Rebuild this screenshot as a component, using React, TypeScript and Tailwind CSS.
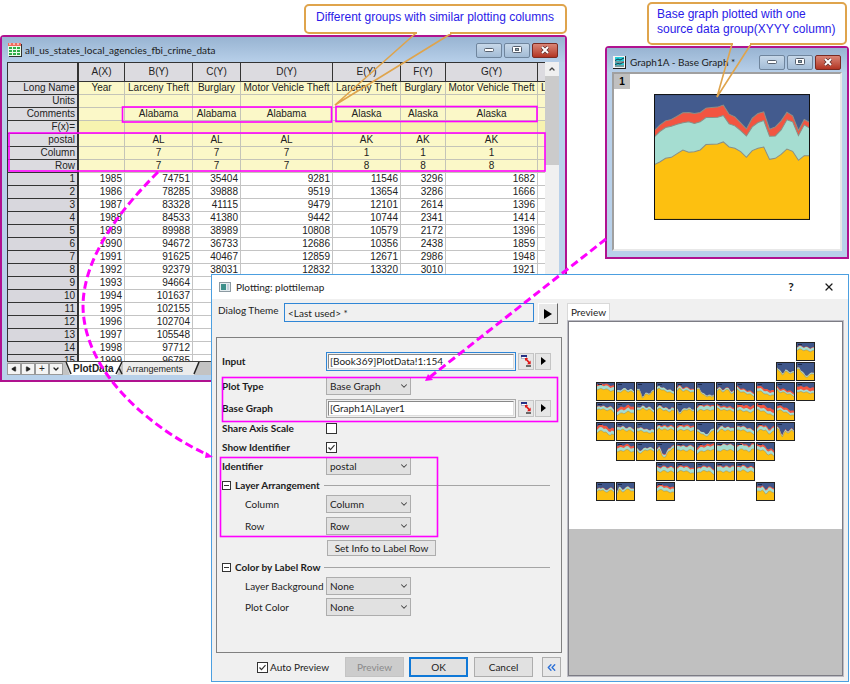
import React from "react";
import { ChevronDown, ChevronUp, ChevronsLeft, Play, X } from "lucide-react";

const COLUMNS = ["A(X)", "B(Y)", "C(Y)", "D(Y)", "E(Y)", "F(Y)", "G(Y)"];

const LABEL_ROWS: { name: string; cells: string[] }[] = [
  { name: "Long Name", cells: ["Year", "Larceny Theft", "Burglary", "Motor Vehicle Theft", "Larceny Theft", "Burglary", "Motor Vehicle Theft"] },
  { name: "Units", cells: ["", "", "", "", "", "", ""] },
  { name: "Comments", cells: ["", "Alabama", "Alabama", "Alabama", "Alaska", "Alaska", "Alaska"] },
  { name: "F(x)=", cells: ["", "", "", "", "", "", ""] },
  { name: "postal", cells: ["", "AL", "AL", "AL", "AK", "AK", "AK"] },
  { name: "Column", cells: ["", "7", "7", "7", "1", "1", "1"] },
  { name: "Row", cells: ["", "7", "7", "7", "8", "8", "8"] },
];

const DATA_ROWS = [
  ["1985", "74751", "35404", "9281", "11546", "3296", "1682"],
  ["1986", "78285", "39888", "9519", "13654", "3286", "1666"],
  ["1987", "83328", "41115", "9479", "12101", "2614", "1396"],
  ["1988", "84533", "41380", "9442", "10744", "2341", "1414"],
  ["1989", "89988", "38989", "10808", "10579", "2172", "1396"],
  ["1990", "94672", "36733", "12686", "10356", "2438", "1859"],
  ["1991", "91625", "40467", "12859", "12671", "2986", "1948"],
  ["1992", "92379", "38031", "12832", "13320", "3010", "1921"],
  ["1993", "94664", "", "", "", "", ""],
  ["1994", "101637", "", "", "", "", ""],
  ["1995", "102155", "", "", "", "", ""],
  ["1996", "102704", "", "", "", "", ""],
  ["1997", "105548", "", "", "", "", ""],
  ["1998", "97712", "", "", "", "", ""],
  ["1999", "96785", "", "", "", "", ""],
];

const RED = [110, 93, 80, 76, 66, 56, 55, 58, 55, 42, 40, 39, 33, 60, 68, 86, 104, 72, 58, 53, 105, 98, 80, 54, 65, 109, 76, 85];
const TEAL = [129, 112, 100, 96, 90, 86, 83, 88, 83, 70, 70, 69, 64, 89, 95, 109, 125, 98, 85, 79, 126, 125, 107, 77, 83, 124, 92, 102];
const GOLD = [211, 203, 192, 189, 178, 167, 174, 172, 167, 151, 150, 149, 143, 158, 162, 172, 189, 169, 162, 158, 195, 192, 180, 164, 171, 198, 184, 184];

interface Tile {
  col: number;
  row: number;
  gold: number[];
  teal: number;
  red: number;
}

const tile = (col: number, row: number, gold: number[], teal: number, red: number): Tile => ({ col, row, gold, teal, red });

// gold is the height of the lowest band, teal and red are band thicknesses
const TILES: Tile[] = [
  tile(11, 1, [8, 7, 8, 8, 9, 9, 9], 2.5, 0.5),
  tile(10, 2, [5, 9, 13, 9, 11, 11, 11], 1.2, 0),
  tile(11, 2, [8, 7, 11, 15, 14, 12, 11], 1.2, 0),

  tile(1, 3, [7, 7, 7, 7, 8, 9, 9], 3, 1.6),
  tile(2, 3, [11, 10, 9, 8, 10, 9, 11], 1.6, 0),
  tile(3, 3, [7, 8, 16, 12, 13, 10, 9], 1, 0),
  tile(4, 3, [9, 6, 8, 9, 10, 11, 11], 2, 0),
  tile(5, 3, [9, 6, 9, 8, 9, 10, 11], 2, 0.8),
  tile(6, 3, [8, 7, 12, 14, 14, 15, 12], 1, 0),
  tile(7, 3, [9, 7, 10, 8, 8, 12, 10], 1.5, 0.4),
  tile(8, 3, [7, 9, 10, 11, 12, 13, 14], 2, 1),
  tile(9, 3, [8, 9, 10, 12, 13, 13, 14], 2.4, 2),
  tile(10, 3, [7, 10, 10, 11, 12, 13, 14], 1.6, 1.4),
  tile(11, 3, [9, 10, 10, 10, 11, 11, 12], 2, 3),

  tile(1, 4, [9, 7, 7, 8, 8, 8, 11], 2.4, 0.5),
  tile(2, 4, [13, 12, 11, 11, 9, 11, 12], 3, 2.6),
  tile(3, 4, [9, 8, 6, 8, 7, 9, 10], 2, 0.3),
  tile(4, 4, [8, 6, 8, 8, 10, 8, 10], 2.2, 0.3),
  tile(5, 4, [7, 12, 9, 8, 7, 9, 8], 1.4, 0),
  tile(6, 4, [10, 8, 8, 8, 8, 8, 9], 3.4, 1),
  tile(7, 4, [6, 7, 8, 8, 8, 9, 9], 2.2, 1.2),
  tile(8, 4, [8, 8, 9, 9, 10, 10, 9], 2.6, 2.6),
  tile(9, 4, [8, 8, 9, 10, 12, 13, 13], 2.4, 3),
  tile(10, 4, [8, 8, 9, 10, 12, 13, 14], 2, 2),

  tile(1, 5, [11, 9, 9, 10, 13, 12, 14], 3, 2.6),
  tile(2, 5, [9, 8, 7, 9, 8, 9, 10], 2.4, 0.4),
  tile(3, 5, [8, 9, 9, 10, 11, 10, 12], 2.4, 0.4),
  tile(4, 5, [10, 6, 8, 7, 8, 7, 8], 2.4, 1),
  tile(5, 5, [9, 8, 8, 8, 8, 9, 9], 3, 1.4),
  tile(6, 5, [10, 10, 12, 14, 13, 9, 7], 1.8, 0),
  tile(7, 5, [11, 9, 7, 9, 8, 9, 10], 2.6, 0.5),
  tile(8, 5, [9, 8, 8, 9, 10, 11, 12], 3, 0.6),
  tile(9, 5, [10, 8, 8, 8, 12, 10, 9], 3, 1.2),
  tile(10, 5, [6, 8, 15, 9, 11, 8, 10], 1.2, 0.5),

  tile(2, 6, [9, 9, 9, 8, 8, 10, 10], 3, 2),
  tile(3, 6, [8, 11, 10, 8, 8, 8, 9], 2, 0.2),
  tile(4, 6, [10, 7, 14, 15, 9, 7, 6], 2, 0.6),
  tile(5, 6, [9, 8, 8, 9, 8, 8, 9], 3.6, 0.5),
  tile(6, 6, [12, 10, 9, 9, 8, 8, 8], 3.6, 1.8),
  tile(7, 6, [10, 9, 8, 8, 8, 8, 9], 4.6, 0.5),
  tile(8, 6, [9, 8, 7, 8, 10, 7, 8], 4, 1),
  tile(9, 6, [8, 8, 8, 10, 13, 12, 14], 3, 1.8),

  tile(4, 7, [9, 10, 9, 9, 10, 9, 10], 3.4, 0.9),
  tile(5, 7, [10, 9, 9, 9, 10, 11, 12], 3.4, 1.2),
  tile(6, 7, [12, 10, 9, 9, 9, 11, 12], 3.4, 0.9),
  tile(7, 7, [8, 9, 10, 9, 10, 9, 10], 4, 0.8),
  tile(8, 7, [10, 9, 8, 9, 10, 9, 10], 3.4, 0.9),

  tile(1, 8, [11, 8, 8, 10, 9, 8, 10], 1.8, 0.4),
  tile(2, 8, [13, 7, 10, 8, 7, 9, 10], 2, 0.2),
  tile(4, 8, [9, 8, 8, 9, 10, 10, 11], 3, 1.6),
  tile(9, 8, [10, 9, 8, 12, 9, 10, 10], 3, 1),
];

function area(values: number[], width: number, height: number) {
  const step = width / (values.length - 1);
  const top = values.map((v, i) => `L${(i * step).toFixed(1)} ${v.toFixed(1)}`).join("");
  return `M0 ${height}${top}L${width} ${height}Z`;
}

function BaseGraph() {
  return (
    <svg viewBox="0 0 466 376" className="block w-[156px] h-[126px]" role="img" aria-label="Base graph">
      <rect width="466" height="376" fill="#435b8e" />
      <g stroke="#8a8f86" strokeWidth="3">
        <path d={area(RED, 466, 376)} fill="#f25541" />
        <path d={area(TEAL, 466, 376)} fill="#a5ddd1" />
        <path d={area(GOLD, 466, 376)} fill="#fdc010" />
      </g>
      <rect x="1.5" y="1.5" width="463" height="373" fill="none" stroke="#111" strokeWidth="3" />
    </svg>
  );
}

function MiniGraph({ t }: { t: Tile }) {
  const gold = t.gold.flatMap((v, i) =>
    i === 0 ? [v] : [(v + t.gold[i - 1]) / 2 + ((i + t.col + t.row) % 2 ? 0.8 : -0.6), v]
  );
  const teal = gold.map((v) => v - t.teal * 1.15);
  const red = teal.map((v) => v - t.red * 1.1);
  return (
    <svg
      viewBox="0 0 19 19"
      className="block w-[19px] h-[19px]"
      style={{ gridColumn: t.col, gridRow: t.row }}
    >
      <rect width="19" height="19" fill="#3f568a" />
      <path d={area(red, 19, 19)} fill="#f25541" />
      <path d={area(teal, 19, 19)} fill="#a5ddd1" />
      <path d={area(gold, 19, 19)} fill="#fdc010" stroke="#98895a" strokeWidth="0.5" />
      <path d="M2 2.5h4" stroke="#1c2a4c" strokeWidth="1" />
      <rect x="0.5" y="0.5" width="18" height="18" fill="none" stroke="#222" />
    </svg>
  );
}

function WindowButtons() {
  const base = "flex items-center justify-center w-[26px] h-[15px] rounded-xs border";
  return (
    <div className="flex gap-[2px]">
      <button aria-label="Minimize" className={`${base} border-[#6f859d] bg-linear-to-b from-[#c7d8e9] to-[#a3bcd6]`}>
        <svg width="10" height="5"><rect x="0.5" y="0.5" width="9" height="3" rx="1" fill="#fff" stroke="#56606e" /></svg>
      </button>
      <button aria-label="Maximize" className={`${base} border-[#6f859d] bg-linear-to-b from-[#c7d8e9] to-[#a3bcd6]`}>
        <svg width="10" height="8">
          <rect x="0.5" y="0.5" width="9" height="6" rx="1" fill="#fff" stroke="#56606e" />
          <rect x="3.5" y="2.5" width="3" height="2" fill="#8aa" stroke="#56606e" />
        </svg>
      </button>
      <button aria-label="Close" className={`${base} border-[#7a2a22] bg-linear-to-b from-[#d98476] to-[#b23322]`}>
        <svg width="10" height="8">
          <path d="M2 1l6 6M8 1L2 7" stroke="#5b2c2c" strokeWidth="3.4" />
          <path d="M2 1l6 6M8 1L2 7" stroke="#fff" strokeWidth="2" />
        </svg>
      </button>
    </div>
  );
}

function SheetIcon() {
  return (
    <svg width="14" height="14" viewBox="0 0 14 14">
      <rect x="1" y="1" width="13" height="13" fill="#333" />
      <rect width="13" height="13" fill="#eafbe9" />
      <rect width="13" height="3" fill="#f06a5c" />
      <path d="M1 4h3v2H1zM5 4h3v2H5zM9 4h3v2H9zM1 7h3v2H1zM5 7h3v2H5zM9 7h3v2H9zM1 10h3v2H1zM5 10h3v2H5zM9 10h3v2H9z" fill="#2fae4a" />
      <path d="M1 1h2M5 1h2M9 1h2" stroke="#fff" />
    </svg>
  );
}

function GraphIcon() {
  return (
    <svg width="13" height="13" viewBox="0 0 13 13">
      <rect width="13" height="13" fill="#222" />
      <rect width="12" height="12" fill="#f4f4f4" />
      <rect x="2" y="1" width="9" height="10" fill="#27cdd8" />
      <path d="M2 4.5l3-1.5 2 1 4-2M2 8.5l3-1 2 .5 4-2" stroke="#123" strokeWidth="0.9" fill="none" />
      <path d="M2 6h9M2 10h9" stroke="#e9504a" strokeWidth="0.8" />
    </svg>
  );
}

function Workbook() {
  const tabButton = "flex items-center justify-center w-[14px] h-[12px] border border-[#999] bg-[#f4f4f4] text-[10px] leading-none";
  return (
    <section className="absolute left-0 top-[35px] w-[567px] h-[347px] flex flex-col rounded-t border-2 border-[#b0128f] bg-[#b9d1ea] pl-[5px] pr-[6px] pb-[5px]">
      <header className="flex h-[25px] shrink-0 items-center gap-[3px] pt-px bg-linear-to-b from-[#98b4d2] to-[#b7cfe9] -ml-[5px] -mr-[6px] pl-[6px] pr-[7px]">
        <SheetIcon />
        <h2 className="flex-1 font-[Lato,sans-serif] text-[10px] text-[#1b1b1b]">all_us_states_local_agencies_fbi_crime_data</h2>
        <WindowButtons />
      </header>
      <div className="flex flex-1 min-h-0 overflow-hidden bg-white">
        <div className="flex-1 min-w-0 overflow-hidden">
          <table className="table-fixed border-separate border-spacing-0 w-full text-[10px] leading-3 text-[#222] whitespace-nowrap">
            <colgroup>
              <col className="w-[72px]" />
              <col className="w-[46px]" />
              <col className="w-[68px]" />
              <col className="w-[48px]" />
              <col className="w-[92px]" />
              <col className="w-[68px]" />
              <col className="w-[45px]" />
              <col className="w-[92px]" />
              <col />
            </colgroup>
            <thead>
              <tr className="h-5">
                <th className="border-r-2 border-b border-t border-l border-[#333] bg-[#dcdbe0] p-0" />
                {COLUMNS.map((c) => (
                  <th key={c} scope="col" className="border-r border-b border-t border-[#333] bg-[#dcdbe0] p-0 font-normal">{c}</th>
                ))}
                <th className="border-b border-t border-[#333] bg-[#dcdbe0] p-0" />
              </tr>
            </thead>
            <tbody>
              {LABEL_ROWS.map((row) => (
                <tr key={row.name} className="h-[13px]">
                  <th scope="row" className="border-b border-l border-r-2 border-[#333] bg-[#dcdbe0] p-0 pr-[2px] text-right font-normal">{row.name}</th>
                  {row.cells.map((cell, i) => (
                    <td
                      key={i}
                      className={`overflow-hidden border-b border-r border-[#c4c4b8] p-0 text-center ${row.name === "F(x)=" ? "bg-[#f7f3b0]" : "bg-[#fbf8c8]"}`}
                    >
                      {cell}
                    </td>
                  ))}
                  <td className={`overflow-hidden border-b border-[#c4c4b8] p-0 pl-[3px] ${row.name === "F(x)=" ? "bg-[#f7f3b0]" : "bg-[#fbf8c8]"}`}>
                    {row.name === "Long Name" ? "L" : ""}
                  </td>
                </tr>
              ))}
              {DATA_ROWS.map((row, r) => (
                <tr key={row[0]} className="h-[13px]">
                  <th scope="row" className="border-b border-l border-r-2 border-[#333] bg-[#d8d7dd] p-0 pr-[2px] text-right font-normal">{r + 1}</th>
                  {row.map((cell, i) => (
                    <td key={i} className="border-b border-r border-[#c4c4c4] p-0 pr-[2px] text-right">{cell}</td>
                  ))}
                  <td className="border-b border-[#c4c4c4] p-0" />
                </tr>
              ))}
            </tbody>
          </table>
        </div>
        <div className="flex w-[14px] flex-col items-center bg-[#f0f0f0]">
          <ChevronUp className="my-[3px] h-2 w-2 text-[#444]" strokeWidth={4} />
          <div className="h-[89px] w-full bg-[#cbcbcb]" />
        </div>
      </div>
      <footer className="flex h-[14px] shrink-0 items-center bg-[#c3c3c3] border-t border-[#444] text-[10px] text-[#222]">
        <button aria-label="Previous sheet" className={tabButton}><Play className="h-[6px] w-[6px] rotate-180 fill-current" /></button>
        <button aria-label="Next sheet" className={tabButton}><Play className="h-[6px] w-[6px] fill-current" /></button>
        <button aria-label="Add sheet" className={tabButton}>+</button>
        <button aria-label="List sheets" className={tabButton}><ChevronDown className="h-2 w-2" strokeWidth={4} /></button>
        <svg width="10" height="13"><path d="M2 0l5 13H10V0z" fill="#fff" /><path d="M3 0l5 12" stroke="#222" strokeWidth="1.5" /></svg>
        <button className="h-[13px] bg-white font-bold leading-3">PlotData</button>
        <svg width="9" height="13"><path d="M0 0H9L3 13H0z" fill="#fff" /><path d="M8 0L2 12M5 6l3 6" stroke="#222" strokeWidth="1.5" /></svg>
        <button className="h-[13px] bg-[#ececec] px-1 text-[9px] leading-3">Arrangements</button>
        <svg width="13" height="13"><path d="M0 0H12L7 13H0z" fill="#ececec" /><path d="M12 0L7 12" stroke="#222" strokeWidth="1.5" /></svg>
      </footer>
    </section>
  );
}

function GraphWindow() {
  return (
    <section className="absolute left-[605px] top-[46px] w-[244px] h-[213px] flex flex-col rounded-t border-2 border-[#b0128f] bg-[#b9d1ea] pb-[6px]">
      <header className="flex h-6 shrink-0 items-center gap-1 bg-linear-to-b from-[#98b4d2] to-[#b7cfe9] pt-1 pl-[6px] pr-[6px]">
        <GraphIcon />
        <h2 className="flex-1 whitespace-nowrap font-[Lato,sans-serif] text-[10px] text-[#1b1b1b]">Graph1A - Base Graph *</h2>
        <WindowButtons />
      </header>
      <div className="mx-[5px] flex flex-1 items-start border-2 border-[#a0a0a0] border-r-[#e8e8e8] border-b-[#e8e8e8] bg-white">
        <button className="h-[15px] w-4 bg-[#c0c0c0] text-[10px] font-bold leading-none">1</button>
        <div className="flex flex-1 pl-[24px] pt-[20px]">
          <BaseGraph />
        </div>
      </div>
    </section>
  );
}

interface ComboProps {
  id: string;
  value: string;
  options: string[];
}

const Combo: React.FC<ComboProps> = ({ id, value, options }) => (
  <div className="relative w-[85px]">
    <select id={id} defaultValue={value} className="block h-[18px] w-full appearance-none border border-[#adadad] bg-[#e1e1e1] pl-[3px] pr-4 leading-4 text-[#222]">
      {options.map((o) => (
        <option key={o}>{o}</option>
      ))}
    </select>
    <ChevronDown className="pointer-events-none absolute right-[2px] top-[4px] h-[10px] w-[10px] text-[#444]" strokeWidth={2.5} />
  </div>
);

function RangeField({ id, value, active }: { id: string; value: string; active?: boolean }) {
  const button = "flex h-[17px] w-4 items-center justify-center border border-[#c4c4c4] bg-[#e6e6e6]";
  return (
    <div className="flex items-center gap-px">
      <div className={`mr-px w-[190px] border p-px ${active ? "border-[#2f86d6]" : "border-[#a9a9a9]"}`}>
        <input id={id} defaultValue={value} className="block h-[15px] w-full border border-[#888] border-r-[#ddd] border-b-[#ddd] bg-white px-px leading-3 text-[#222] outline-none" />
      </div>
      <button aria-label={`Select ${id}`} className={button}>
        <svg width="11" height="12" viewBox="0 0 11 12">
          <rect x="0.5" y="0.5" width="5" height="3" fill="#fff" stroke="#8a90b0" strokeWidth="0.6" />
          <path d="M0 1h6" stroke="#14207a" strokeWidth="1.8" />
          <path d="M4.5 3.5l4.5 5" stroke="#e01818" strokeWidth="1.8" />
          <path d="M4 3h3.2L4 6zM9.6 5.6v3.6H6z" fill="#e01818" />
          <path d="M5 11h5" stroke="#333" strokeWidth="1.4" />
        </svg>
      </button>
      <button aria-label={`${id} options`} className={button}>
        <svg width="5" height="8"><path d="M0 0l5 4-5 4z" fill="#000" /></svg>
      </button>
    </div>
  );
}

function CheckBox({ id, checked }: { id: string; checked?: boolean }) {
  return (
    <span className="relative flex h-[11px] w-[11px]">
      <input id={id} type="checkbox" defaultChecked={checked} className="peer h-[11px] w-[11px] appearance-none border border-[#333] bg-white" />
      <svg viewBox="0 0 11 11" className="pointer-events-none absolute inset-0 hidden peer-checked:block">
        <path d="M2.5 5.5l2 2.2 4-4.6" stroke="#333" strokeWidth="1.2" fill="none" />
      </svg>
    </span>
  );
}

function Section({ title }: { title: string }) {
  return (
    <div className="flex w-full items-center gap-1">
      <button aria-label={`Collapse ${title}`} className="flex h-[9px] w-[9px] items-center justify-center border border-[#333] bg-white">
        <span className="h-px w-[5px] bg-[#333]" />
      </button>
      <h3 className="font-bold">{title}</h3>
      <div className="h-px flex-1 bg-[#a5a5a5]" />
    </div>
  );
}

function PlotDialog() {
  const label = "w-[104px] shrink-0 font-bold";
  const subLabel = "w-[104px] shrink-0 pl-[23px] whitespace-nowrap";
  const push = "h-5 w-[59px] border border-[#adadad] bg-[#e1e1e1]";
  return (
    <section
      role="dialog"
      aria-label="Plotting: plottilemap"
      className="absolute left-[211px] top-[274px] w-[638px] h-[408px] flex flex-col border border-[#4c9fe0] bg-[#f0f0f0] font-[Lato,sans-serif] text-[10px] leading-3 text-[#1c1c1c]"
    >
      <header className="flex h-6 shrink-0 items-center bg-white pl-[7px] pr-[13px]">
        <svg width="12" height="10">
          <rect x="0.5" y="0.5" width="11" height="9" fill="#e4ecef" stroke="#8c9aa2" />
          <rect x="2" y="2" width="5" height="6" fill="#3c8f8a" />
          <path d="M9 2v6" stroke="#9fb4c8" />
        </svg>
        <h2 className="flex-1 pl-[5px]">Plotting: plottilemap</h2>
        <button aria-label="Help" className="mr-6 w-4 text-[12px] font-bold">?</button>
        <button aria-label="Close"><X className="h-3 w-3" strokeWidth={2.5} /></button>
      </header>
      <div className="flex flex-1 min-h-0">
        <div className="flex w-[350px] flex-col pl-1 pt-1 pb-1">
          <div className="flex items-start">
            <label htmlFor="theme" className="w-[68px] pl-[2px] pt-px">Dialog Theme</label>
            <input id="theme" defaultValue="<Last used> *" className="h-[19px] w-[250px] border border-[#2f86d6] bg-[#f0f0f0] px-[3px] outline-none" />
            <button aria-label="Theme options" className="ml-1 flex h-[21px] w-[20px] items-center justify-center border border-white border-r-[#666] border-b-[#666] bg-[#e8e8e8]">
              <svg width="8" height="10"><path d="M0 0l8 5-8 5z" fill="#000" /></svg>
            </button>
          </div>
          <form className="mt-[13px] flex flex-1 flex-col border border-[#808080] pl-[5px] pr-[11px] pt-[10px]" onSubmit={(e) => e.preventDefault()}>
            <div className="flex h-[26px] items-center">
              <label htmlFor="input" className={label}>Input</label>
              <RangeField id="input" value="[Book369]PlotData!1:154" active />
            </div>
            <div className="flex h-6 items-center">
              <label htmlFor="plotType" className={label}>Plot Type</label>
              <Combo id="plotType" value="Base Graph" options={["Base Graph", "Line", "Area"]} />
            </div>
            <div className="flex h-5 items-center">
              <label htmlFor="baseGraph" className={label}>Base Graph</label>
              <RangeField id="baseGraph" value="[Graph1A]Layer1" />
            </div>
            <div className="flex h-5 items-center">
              <label htmlFor="shareAxis" className={label}>Share Axis Scale</label>
              <CheckBox id="shareAxis" />
            </div>
            <div className="flex h-[18px] items-center">
              <label htmlFor="showIdentifier" className={label}>Show Identifier</label>
              <CheckBox id="showIdentifier" checked />
            </div>
            <div className="flex h-5 items-center">
              <label htmlFor="identifier" className={label}>Identifier</label>
              <Combo id="identifier" value="postal" options={["postal", "Column", "Row"]} />
            </div>
            <div className="flex h-[18px] items-center">
              <Section title="Layer Arrangement" />
            </div>
            <div className="flex h-5 items-center">
              <label htmlFor="column" className={subLabel}>Column</label>
              <Combo id="column" value="Column" options={["postal", "Column", "Row"]} />
            </div>
            <div className="flex h-6 items-center">
              <label htmlFor="row" className={subLabel}>Row</label>
              <Combo id="row" value="Row" options={["postal", "Column", "Row"]} />
            </div>
            <div className="flex h-5 items-center pl-[105px]">
              <button className="h-4 w-[109px] whitespace-nowrap border border-[#adadad] bg-[#e6e6e6]">Set Info to Label Row</button>
            </div>
            <div className="flex h-[18px] items-center">
              <Section title="Color by Label Row" />
            </div>
            <div className="flex h-5 items-center">
              <label htmlFor="background" className={subLabel}>Layer Background</label>
              <Combo id="background" value="None" options={["None", "postal"]} />
            </div>
            <div className="flex h-[22px] items-center">
              <label htmlFor="plotColor" className={subLabel}>Plot Color</label>
              <Combo id="plotColor" value="None" options={["None", "postal"]} />
            </div>
          </form>
          <div className="mt-1 flex h-5 items-center justify-end pr-px">
            <CheckBox id="auto" checked />
            <label htmlFor="auto" className="w-[77px] pl-[2px]">Auto Preview</label>
            <button disabled className="h-5 w-[59px] border border-[#c4c4c4] bg-[#cccccc] text-[#8a8a8a]">Preview</button>
            <button className="ml-[5px] h-5 w-[59px] border-2 border-[#0f78d7] bg-[#e1e1e1]">OK</button>
            <button className={`ml-[6px] ${push}`}>Cancel</button>
            <button aria-label="Hide preview" className="ml-[9px] flex h-5 w-[19px] items-center justify-center border border-[#adadad] bg-[#e8e8e8]">
              <ChevronsLeft className="h-[13px] w-[13px] text-[#2b6fd6]" strokeWidth={2.5} />
            </button>
          </div>
        </div>
        <div className="flex flex-1 flex-col pl-[5px] pr-1 pb-1 pt-1">
          <button className="h-[17px] w-[43px] border border-b-0 border-[#d9d9d9] bg-white">Preview</button>
          <div className="flex flex-1 flex-col border border-[#bcbcc4]">
            <div className="flex flex-1 flex-col border border-[#7c7c84] bg-[#c0c0c0]">
              <div className="h-[207px] bg-white pl-[27px] pt-[20px]">
                <div className="grid w-max grid-cols-[repeat(11,20px)] grid-rows-[repeat(8,20px)]">
                  {TILES.map((t) => (
                    <MiniGraph key={`${t.col}-${t.row}`} t={t} />
                  ))}
                </div>
              </div>
            </div>
          </div>
        </div>
      </div>
    </section>
  );
}

function Annotations() {
  return (
    <>
      <svg width="850" height="684" className="pointer-events-none absolute left-0 top-0" aria-hidden="true">
        <g fill="none" stroke="#ff00ff" strokeWidth="1.6">
          <rect x="122.5" y="107" width="209" height="15" />
          <rect x="336" y="106.5" width="201" height="15" />
          <rect x="9" y="133" width="536" height="38" />
          <rect x="222.5" y="377.5" width="335" height="44" />
          <rect x="220.5" y="457.5" width="217" height="79" />
        </g>
        <g fill="none" stroke="#ff00ff" strokeWidth="3" strokeDasharray="8 4">
          <path d="M158 172C118 212 84 258 83 305C83 372 150 428 208 455" />
          <path d="M606 239L430 377" />
        </g>
        <path d="M213 457l-7-5 -1 6zM425 381l3-7 5 6z" fill="#ff00ff" />
        <g fill="#fff" stroke="#dfa44c" strokeWidth="2">
          <rect x="305" y="5" width="261" height="28" rx="4" />
          <rect x="648" y="3" width="198" height="41" rx="4" />
        </g>
        <g fill="none" stroke="#dfa44c" strokeWidth="1.6">
          <path d="M416 33L335 105L452 33" />
          <path d="M732 44L717 97L751 44" />
        </g>
        <path d="M417 33H450M733 44H750" stroke="#fff" strokeWidth="2" />
      </svg>
      <p className="absolute left-[316px] top-[10px] whitespace-nowrap text-[12px] leading-[15px] text-[#2a1ae8]">
        Different groups with similar plotting columns
      </p>
      <p className="absolute left-[657px] top-[7px] whitespace-nowrap text-[12px] leading-[15px] text-[#2a1ae8]">
        Base graph plotted with one
        <br />
        source data group(XYYY column)
      </p>
    </>
  );
}

const App: React.FC = () => {
  return (
    <main className="relative min-h-screen w-full overflow-hidden bg-white font-['Liberation_Sans',Arial,sans-serif]">
      <Workbook />
      <GraphWindow />
      <PlotDialog />
      <Annotations />
    </main>
  );
};

export default App;
